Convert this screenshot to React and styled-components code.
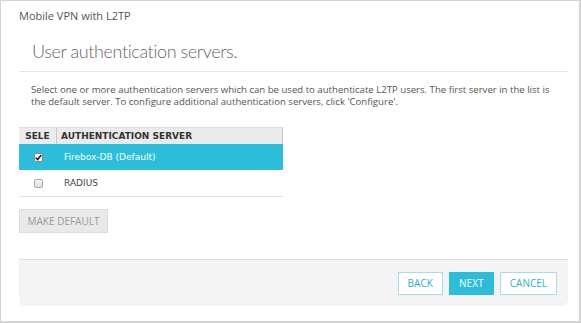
import styled, { createGlobalStyle } from "styled-components";

const GlobalStyle = createGlobalStyle`
  body {
    margin: 0;
    font-family: "Open Sans", "Liberation Sans", sans-serif;
    background: #fff;
  }
`;

const servers = [
  { name: "Firebox-DB (Default)", selected: true },
  { name: "RADIUS", selected: false },
];

export default function App() {
  return (
    <>
      <GlobalStyle />
      <Frame>
        <Crumb>Mobile VPN with L2TP</Crumb>
        <Heading>User authentication servers.</Heading>
        <Divider />
        <Intro>
          Select one or more authentication servers which can be used to authenticate L2TP users. The first server in the list is
          the default server. To configure additional authentication servers, click 'Configure'.
        </Intro>
        <Table>
          <HeadRow>
            <SelCell $head>SELE</SelCell>
            <NameCell $head>AUTHENTICATION SERVER</NameCell>
          </HeadRow>
          {servers.map((s) => (
            <Row key={s.name} $selected={s.selected}>
              <SelCell>
                <Check $checked={s.selected}>
                  {s.selected && (
                    <svg width="7" height="7" viewBox="0 0 7 7">
                      <path d="M0.8 3.6 L2.7 5.6 L6.3 1" fill="none" stroke="#222" strokeWidth="1.6" />
                    </svg>
                  )}
                </Check>
              </SelCell>
              <NameCell>{s.name}</NameCell>
            </Row>
          ))}
        </Table>
        <GrayButton>MAKE DEFAULT</GrayButton>
        <Footer>
          <Button>BACK</Button>
          <Button $primary>NEXT</Button>
          <Button>CANCEL</Button>
        </Footer>
      </Frame>
    </>
  );
}

const Frame = styled.div`
  box-sizing: border-box;
  width: 581px;
  height: 323px;
  border: 1px solid #d4d4d4;
  border-right-width: 2px;
  border-bottom-width: 2px;
  padding: 0 11px 0 18px;
  display: flex;
  flex-direction: column;
`;

const Crumb = styled.div`
  margin-top: 7px;
  font-size: 11px;
  line-height: 15px;
  color: #555;
`;

const Heading = styled.h1`
  margin: 16px 0 0 13px;
  font-family: Lato, "Open Sans", sans-serif;
  font-size: 18px;
  line-height: 24px;
  font-weight: 300;
  letter-spacing: -0.4px;
  color: #666;
`;

const Divider = styled.div`
  margin-top: 8px;
  border-top: 1px solid #e6e6e6;
`;

const Intro = styled.p`
  margin: 12px 0 0 12px;
  width: 530px;
  font-size: 9.6px;
  line-height: 12px;
  color: #555;
`;

const Table = styled.div`
  margin-top: 19px;
  width: 264px;
  font-family: "DejaVu Sans", Verdana, sans-serif;
  font-size: 9px;
  border-bottom: 1px solid #e2e2e2;
`;

const HeadRow = styled.div`
  display: flex;
  height: 16px;
  background: #ebebeb;
  border-top: 1px solid #dedede;
  border-right: 1px solid #c8c8c8;
  font-weight: bold;
  color: #333;
`;

const Row = styled.div`
  display: flex;
  height: 26px;
  background: ${(p) => (p.$selected ? "#2bbdd9" : "#fff")};
  color: ${(p) => (p.$selected ? "#fff" : "#444")};
`;

const SelCell = styled.div`
  width: 38px;
  box-sizing: border-box;
  display: flex;
  align-items: center;
  justify-content: center;
  border-right: ${(p) => (p.$head ? "1px solid #c8c8c8" : "none")};
`;

const NameCell = styled.div`
  flex: 1;
  display: flex;
  align-items: center;
  padding-left: ${(p) => (p.$head ? "4px" : "7px")};
`;

const Check = styled.span`
  box-sizing: border-box;
  width: 9px;
  height: 9px;
  border: 1px solid ${(p) => (p.$checked ? "#888" : "#aaa")};
  border-radius: 2px;
  background: ${(p) => (p.$checked ? "#fff" : "linear-gradient(#f4f4f4, #e0e0e0)")};
  display: flex;
  align-items: center;
  justify-content: center;
`;

const GrayButton = styled.div`
  margin-top: 12px;
  align-self: flex-start;
  box-sizing: border-box;
  width: 89px;
  height: 24px;
  display: flex;
  align-items: center;
  justify-content: center;
  background: #e9e9e9;
  border: 1px solid #dcdcdc;
  font-size: 10px;
  color: #999;
`;

const Footer = styled.div`
  margin-top: 26px;
  height: 47px;
  box-sizing: border-box;
  border-top: 1px solid #dcdcdc;
  background: #f3f3f3;
  border-radius: 0 0 6px 6px;
  display: flex;
  align-items: center;
  justify-content: flex-end;
  gap: 6px;
  padding-right: 11px;
`;

const Button = styled.div`
  box-sizing: border-box;
  height: 23px;
  padding: 0 9px;
  min-width: 45px;
  display: flex;
  align-items: center;
  justify-content: center;
  font-size: 10px;
  background: ${(p) => (p.$primary ? "#2bbdd9" : "#fff")};
  color: ${(p) => (p.$primary ? "#fff" : "#2bb0cc")};
  border: 1px solid ${(p) => (p.$primary ? "#2bbdd9" : "#a7dce6")};
`;
